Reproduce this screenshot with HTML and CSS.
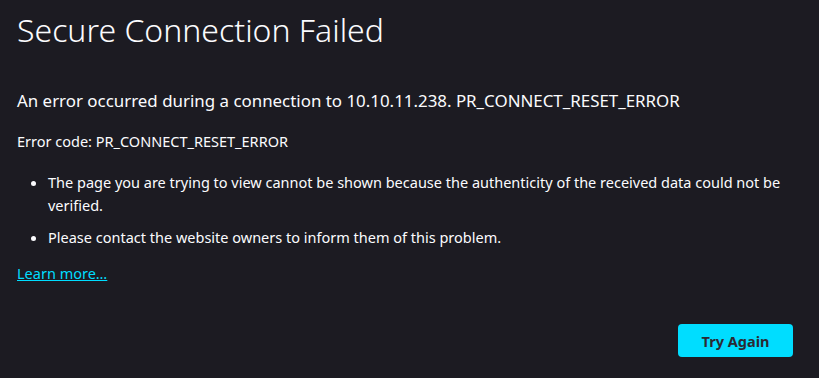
FILE: index.html
```html
<!DOCTYPE html>
<html lang="en">
<head>
<meta charset="utf-8">
<title>Secure Connection Failed</title>
<link rel="stylesheet" href="styles.css">
</head>
<body>
<main class="container">
  <h1 class="title">Secure Connection Failed</h1>
  <p class="short-desc">An error occurred during a connection to 10.10.11.238. PR_CONNECT_RESET_ERROR</p>
  <p class="error-code">Error code: PR_CONNECT_RESET_ERROR</p>
  <ul class="long-desc">
    <li>The page you are trying to view cannot be shown because the authenticity of the received data could not be verified.</li>
    <li>Please contact the website owners to inform them of this problem.</li>
  </ul>
  <p class="learn"><a href="#" class="learn-more">Learn more…</a></p>
  <div class="actions">
    <button class="try-again" type="button">Try Again</button>
  </div>
</main>
</body>
</html>
```

FILE: styles.css
```css
html, body {
  margin: 0;
  padding: 0;
  background: #1c1b22;
  color: #fbfbfe;
  font-family: "Noto Sans", "Open Sans", sans-serif;
}
.container {
  width: 776px;
  padding: 0 0 0 17px;
}
.title {
  margin: 0;
  padding-top: 8px;
  font-weight: 300;
  font-size: 32px;
  line-height: 44px;
}
.short-desc {
  margin: 37px 0 0;
  font-size: 16.9px;
  line-height: 24px;
}
.error-code {
  margin: 18px 0 0;
  font-size: 14.5px;
  line-height: 20px;
}
.long-desc {
  margin: 20px 0 0;
  padding-left: 31px;
  font-size: 14.5px;
  line-height: 23px;
}
.long-desc li {
  margin-bottom: 9px;
}
.learn {
  margin: 14px 0 0;
  font-size: 14.5px;
  line-height: 20px;
}
.learn-more {
  color: #00ddff;
}
.actions {
  display: flex;
  justify-content: flex-end;
  margin-top: 41px;
}
.try-again {
  width: 115px;
  height: 33px;
  border: none;
  border-radius: 4px;
  background: #00ddff;
  color: #2b2a33;
  font-family: inherit;
  font-weight: 700;
  font-size: 14.5px;
}
```
